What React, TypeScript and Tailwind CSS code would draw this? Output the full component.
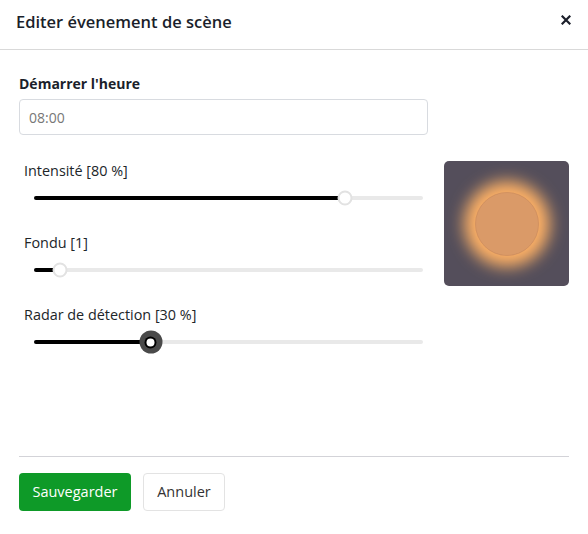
import React from "react";

function Slider({ label, pct, big }: { label: string; pct: number; big?: boolean }) {
  return (
    <div className="flex flex-col pl-[5px] pr-[5px]">
      <div className="h-5 text-[14.4px] leading-5 text-[#212529]">{label}</div>
      <div className="relative mt-[7px] ml-[10px] h-5 flex items-center">
        <div className="relative h-1 w-full rounded-full bg-[#e9e9e9]">
          <div className="absolute left-0 top-0 h-1 rounded-full bg-black" style={{ width: `${pct}%` }} />
        </div>
        {big ? (
          <div
            className="absolute top-1/2 h-[23px] w-[23px] -translate-x-1/2 -translate-y-1/2 rounded-full bg-[#4a4a4a] flex items-center justify-center"
            style={{ left: `${pct}%` }}
          >
            <div className="h-[12px] w-[12px] rounded-full bg-black flex items-center justify-center">
              <div className="h-[8px] w-[8px] rounded-full bg-white" />
            </div>
          </div>
        ) : (
          <div
            className="absolute top-1/2 h-[15px] w-[15px] -translate-x-1/2 -translate-y-1/2 rounded-full bg-white border-2 border-[#e2e2e2]"
            style={{ left: `${pct}%` }}
          />
        )}
      </div>
    </div>
  );
}

export default function App() {
  return (
    <div className="w-[588px] h-[534px] bg-white font-['Open_Sans',sans-serif] flex flex-col">
      <div className="h-[50px] border-b border-[#d9d9d9] flex items-center justify-between pl-4 pr-[16px]">
        <div className="text-[16.5px] font-semibold text-[#1b1f2b] leading-6 -mt-[5px]">Editer évenement de scène</div>
        <svg width="10" height="10" viewBox="0 0 10 10" className="-mt-[9px] mr-[1px]">
          <path d="M1.5 1.5 L8.5 8.5 M8.5 1.5 L1.5 8.5" stroke="#1b1f2b" strokeWidth="2.2" strokeLinecap="square" />
        </svg>
      </div>
      <div className="flex-1 px-[19px] pt-[24px] flex flex-col">
        <div className="text-[14px] leading-5 font-bold text-[#1b1f2b]">Démarrer l'heure</div>
        <div className="mt-[5px] w-[409px] h-9 rounded border border-[#d8dbe0] flex items-center px-[9px] text-[14px] text-[#777]">
          08:00
        </div>
        <div className="mt-[26px] flex gap-4">
          <div className="w-[409px] flex flex-col gap-[25px]">
            <Slider label="Intensité [80 %]" pct={80} />
            <Slider label="Fondu [1]" pct={6.7} />
            <Slider label="Radar de détection [30 %]" pct={30} big />
          </div>
          <div className="w-[125px] h-[125px] rounded-[5px] bg-[#544e5b] flex items-center justify-center overflow-hidden">
            <div className="w-[64px] h-[64px] rounded-full bg-[#da9a68] border border-[#d39260] shadow-[0_0_16px_11px_rgba(255,178,102,1)]" />
          </div>
        </div>
        <div className="mt-auto border-t border-[#d3d3d8]" />
        <div className="pt-4 pb-[23px] flex gap-3">
          <button className="h-[38px] w-[112px] rounded bg-[#0e9a28] text-white text-[14.5px]">Sauvegarder</button>
          <button className="h-[38px] w-[82px] rounded border border-[#e3e3e3] bg-white text-[#333] text-[14.5px]">Annuler</button>
        </div>
      </div>
    </div>
  );
}
